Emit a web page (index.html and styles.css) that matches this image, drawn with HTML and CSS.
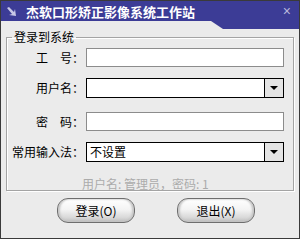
FILE: index.html
```html
<!DOCTYPE html>
<html lang="zh-CN">
<head>
  <meta charset="UTF-8" />
  <title>杰软口形矫正影像系统工作站</title>
  <link rel="stylesheet" href="styles.css">
</head>
<body>
  <div class="window">
    <div class="titlebar">
      <svg class="title-icon" width="9" height="9" viewBox="0 0 9 9">
        <path d="M0 1 L2 0 L7 5 L8 2 L9 9 L2 8 L5 7 Z" fill="#c8c8e6" />
      </svg>
      <span class="title-text">杰软口形矫正影像系统工作站</span>
      <span class="close">×</span>
    </div>

    <fieldset class="login-box">
      <legend>登录到系统</legend>

      <div class="row">
        <label>工　号：</label>
        <input type="text" class="field" />
      </div>

      <div class="row">
        <label>用户名：</label>
        <div class="combo">
          <span class="combo-text"></span>
          <span class="combo-btn"><i class="arrow"></i></span>
        </div>
      </div>

      <div class="row row-pw">
        <label>密　码：</label>
        <input type="password" class="field" />
      </div>

      <div class="row">
        <label>常用输入法：</label>
        <div class="combo">
          <span class="combo-text">不设置</span>
          <span class="combo-btn"><i class="arrow"></i></span>
        </div>
      </div>

      <p class="hint">用户名: 管理员，密码: 1</p>
    </fieldset>

    <div class="buttons">
      <button class="btn">登录(O)</button>
      <button class="btn">退出(X)</button>
    </div>
  </div>
</body>
</html>
```

FILE: styles.css
```css
*, *::before, *::after { margin: 0; padding: 0; box-sizing: border-box; }

body {
  font-family: "Noto Sans CJK SC", "Liberation Sans", sans-serif;
  font-size: 12px;
  background: #fff;
  color: #000;
}

.window {
  width: 300px;
  height: 239px;
  border: 1px solid #3a3a3a;
  background: #ebebeb;
}

.titlebar {
  height: 28px;
  background: #3c3c96;
  clip-path: polygon(0 0, 100% 0, 100% 28px, 222px 28px, 210px 20px, 0 20px);
  display: flex;
  align-items: flex-start;
  color: #fff;
}

.title-icon {
  margin: 6px 0 0 6px;
}

.title-text {
  margin-left: 10px;
  font-size: 13px;
  font-weight: bold;
  line-height: 21px;
}

.close {
  margin-left: auto;
  margin-right: 8px;
  font-family: "Liberation Sans", sans-serif;
  font-size: 14px;
  line-height: 21px;
  color: #b8b8dc;
}

.login-box {
  margin: 1px 5px 0 5px;
  height: 161px;
  border: 1px solid #a4a4a4;
  box-shadow: inset 1px 1px 0 #fff, 1px 1px 0 #fff;
  padding: 4px 9px 0 0;
  display: flex;
  flex-direction: column;
  gap: 11px;
}

.login-box legend {
  margin-left: 5px;
  padding: 0 2px;
  line-height: 14px;
}

.row {
  display: flex;
  align-items: center;
  height: 19px;
}

.row-pw {
  margin-top: 4px;
}

.row label {
  width: 77px;
  margin-right: 2px;
  text-align: right;
  white-space: nowrap;
}

.field {
  width: 198px;
  height: 19px;
  border: 1px solid #8c8c8c;
  background: #fff;
  outline: none;
}

.combo {
  width: 198px;
  height: 20px;
  border: 1px solid #000;
  background: #fff;
  display: flex;
}

.combo-text {
  flex: 1;
  padding-left: 3px;
  line-height: 18px;
}

.combo-btn {
  width: 19px;
  border-left: 1px solid #000;
  background: #e4e4e4;
  display: flex;
  align-items: center;
  justify-content: center;
}

.arrow {
  width: 0;
  height: 0;
  border-left: 4px solid transparent;
  border-right: 4px solid transparent;
  border-top: 4px solid #000;
}

.hint {
  margin: 3px 0 0 75px;
  color: #ababab;
}

.buttons {
  display: flex;
  gap: 42px;
  padding: 7px 0 0 56px;
}

.btn {
  width: 78px;
  height: 25px;
  border: 1px solid #6e6e6e;
  border-radius: 11px;
  background: linear-gradient(to bottom, #ffffff 0%, #f4f4f4 45%, #d9d9d9 80%, #bdbdbd 100%);
  box-shadow: inset 2px 0 2px #c6c6c6, inset -2px 0 2px #c6c6c6;
  font-family: "Noto Sans CJK SC", sans-serif;
  font-size: 12px;
  color: #000;
}
```
